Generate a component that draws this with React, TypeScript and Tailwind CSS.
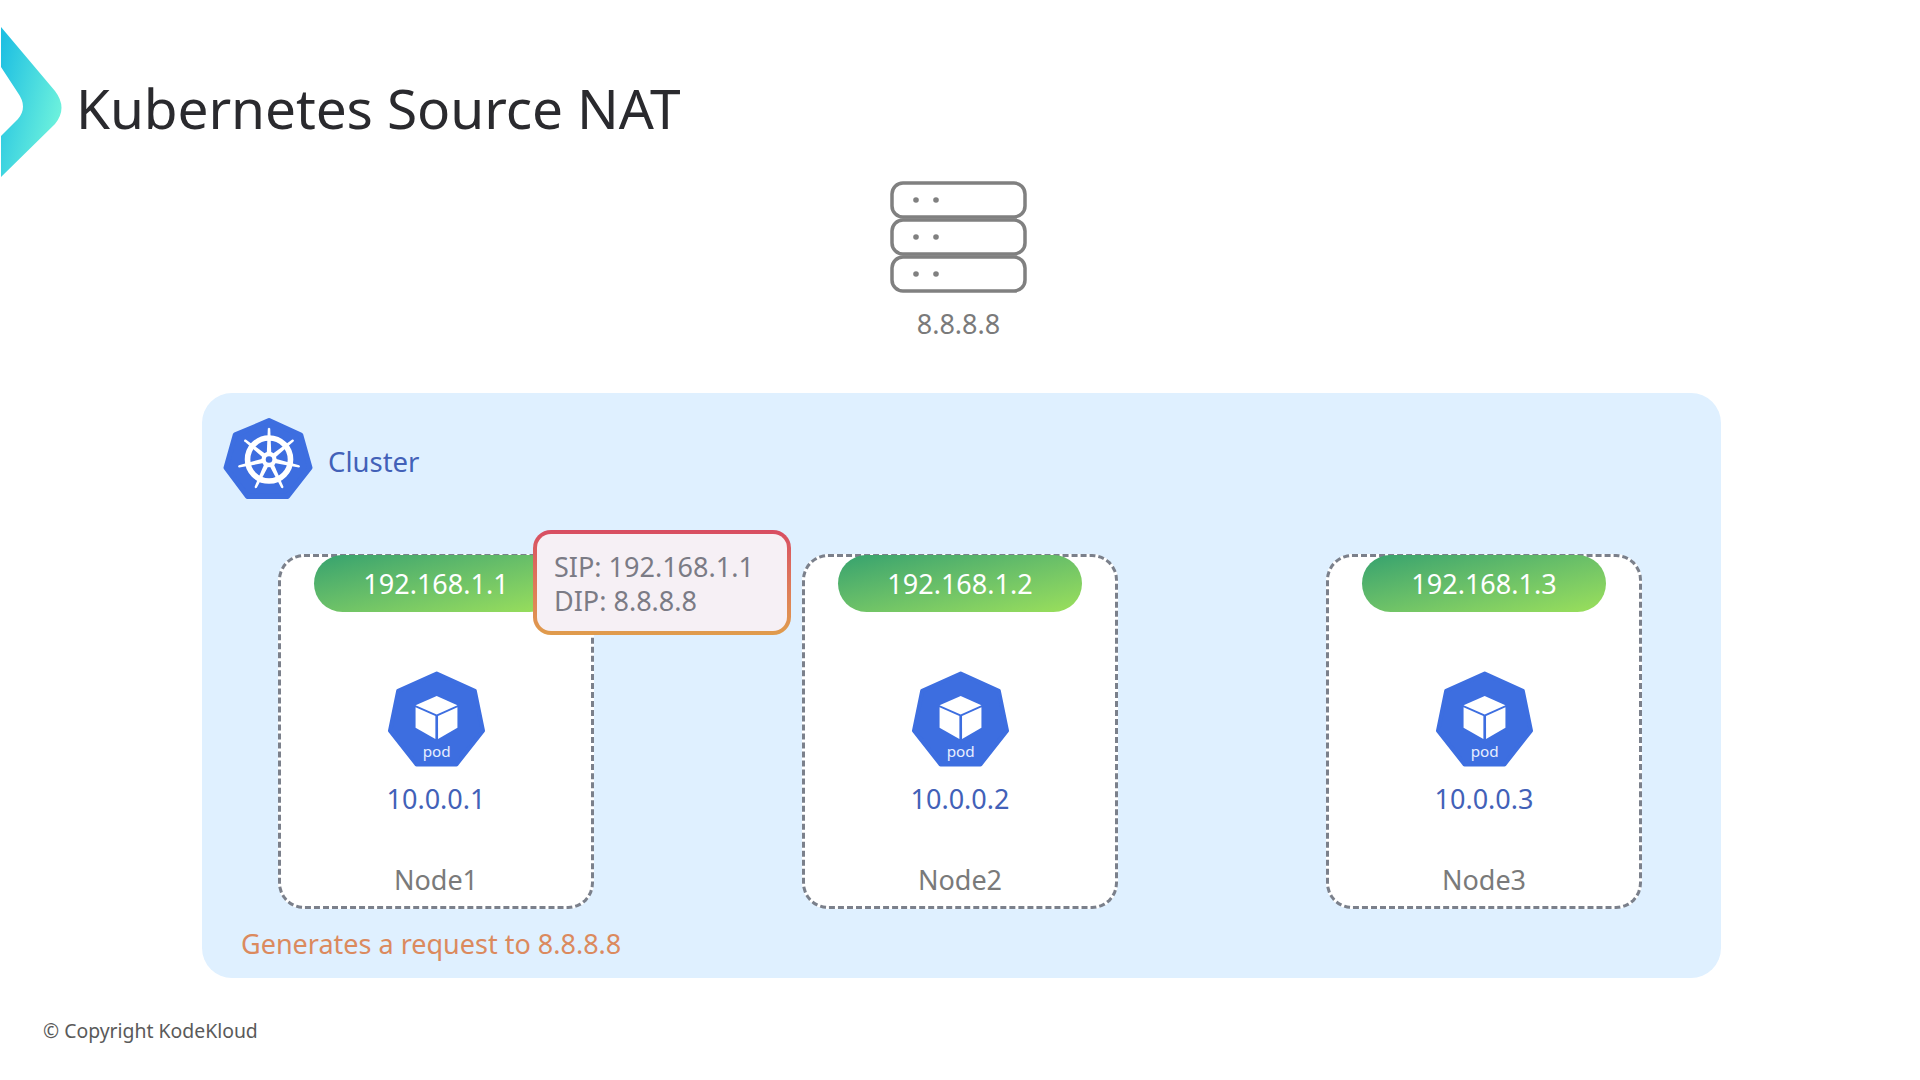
const font = { fontFamily: '"Noto Sans", sans-serif' };

const nodes = [
  { name: "Node1", publicIp: "192.168.1.1", podIp: "10.0.0.1" },
  { name: "Node2", publicIp: "192.168.1.2", podIp: "10.0.0.2" },
  { name: "Node3", publicIp: "192.168.1.3", podIp: "10.0.0.3" },
];

const Chevron = () => (
  <svg width="64" height="152" viewBox="0 0 64 150" className="shrink-0">
    <defs>
      <linearGradient id="chev" x1="0" y1="0.15" x2="1" y2="0.75">
        <stop offset="0" stopColor="#1fc0e2" />
        <stop offset="1" stopColor="#74f6dc" />
      </linearGradient>
    </defs>
    <path
      d="M1 0 L55 64 Q68 81 55 97 L1 150 V109 L18 92 Q28 80 18 66 L1 40 Z"
      fill="url(#chev)"
    />
  </svg>
);

const ServerIcon = () => (
  <svg width="137" height="112" viewBox="0 0 137 112">
    {[0, 37, 74].map((y) => (
      <g key={y}>
        <rect x="2" y={y + 2} width="133" height="34" rx="11" fill="#fff" stroke="#808080" strokeWidth="3.5" />
        <circle cx="26" cy={y + 19} r="2.8" fill="#808080" />
        <circle cx="46" cy={y + 19} r="2.8" fill="#808080" />
      </g>
    ))}
  </svg>
);

const WheelIcon = () => {
  const spokes = [0, 1, 2, 3, 4, 5, 6].map((i) => (i * 360) / 7);
  return (
    <svg width="90" height="83" viewBox="0 0 88 80" className="shrink-0">
      <polygon
        points="45,3 76,17 85,49 63,77 24,77 3,49 12,17"
        fill="#3d6ee0"
        stroke="#3d6ee0"
        strokeWidth="5"
        strokeLinejoin="round"
      />
      <circle cx="45" cy="41" r="21" fill="none" stroke="#fff" strokeWidth="5.5" />
      {spokes.map((a) => (
        <g key={a} transform={`rotate(${a} 45 41)`}>
          <path d="M42.8 35 L43.8 11 Q45 9 46.2 11 L47.2 35 Z" fill="#fff" />
        </g>
      ))}
      <circle cx="45" cy="41" r="7.5" fill="#fff" />
      <circle cx="45" cy="41" r="3.2" fill="#3d6ee0" />
    </svg>
  );
};

const PodIcon = () => (
  <svg width="97" height="96" viewBox="0 0 95 93">
    <polygon
      points="47.7,2 85,19 93,58 67,91 28,91 2,58 10,19"
      fill="#3d6ee0"
      stroke="#3d6ee0"
      strokeWidth="4"
      strokeLinejoin="round"
    />
    <polygon points="47.7,24 68,33 47.7,42 27,33" fill="#fff" />
    <polygon points="27,35 46.4,43.5 46.4,66 27,55" fill="#fff" />
    <polygon points="68,35 49,43.5 49,66 68,55" fill="#fff" />
    <text x="47.7" y="84" textAnchor="middle" fontSize="15" fill="#e8efff" style={font}>
      pod
    </text>
  </svg>
);

const NodeCard = ({ name, publicIp, podIp, children }: { name: string; publicIp: string; podIp: string; children?: React.ReactNode }) => (
  <div className="relative flex h-[355px] w-[316px] flex-col items-center rounded-[26px] border-[3px] border-dashed border-[#7b808b] bg-white">
    <div className="-mt-[2px] flex h-[57px] w-[244px] shrink-0 items-center justify-center rounded-full bg-gradient-to-br from-[#34a26e] to-[#9be05a] pt-[2px] text-[27px] text-white">
      {publicIp}
    </div>
    <div className="mt-[59px] flex h-[96px] items-center">
      <PodIcon />
    </div>
    <div className="mt-[14px] text-[27px] leading-[36px] text-[#4261b8]">{podIp}</div>
    <div className="mt-[45px] text-[27px] leading-[36px] text-[#7a7a7a]">{name}</div>
    {children}
  </div>
);

export default function App() {
  return (
    <div className="flex h-screen w-full flex-col overflow-hidden bg-white pt-[27px]" style={font}>
      <header className="flex h-[150px] items-center gap-[12px]">
        <Chevron />
        <h1 className="mt-[10px] text-[55px] leading-none tracking-[-0.1px] text-[#2a2a2e]">Kubernetes Source NAT</h1>
      </header>

      <section className="mt-[4px] flex w-[1917px] flex-col items-center">
        <ServerIcon />
        <div className="mt-[13px] text-[27px] leading-[36px] text-[#7a7a7a]">8.8.8.8</div>
      </section>

      <section className="ml-[202px] mt-[51px] h-[585px] w-[1519px] rounded-[30px] bg-[#dff0ff] px-[76px]">
        <div className="-ml-[55px] flex h-[107px] items-end gap-[15px]">
          <WheelIcon />
          <span className="pb-[20px] text-[27.5px] leading-[36px] text-[#4261b8]">Cluster</span>
        </div>
        <div className="mt-[54px] flex gap-[208px]">
          {nodes.map((n, i) => (
            <NodeCard key={n.name} {...n}>
              {i === 0 && (
                <div className="absolute left-[252px] top-[-27px] z-10 h-[105px] w-[258px] rounded-[18px] bg-gradient-to-b from-[#d84d62] to-[#e09c4c] p-[4px]">
                  <div className="flex h-full w-full flex-col justify-center rounded-[14px] bg-[#f6f0f5] pl-[17px] pt-[2px] text-[27px] leading-[34px] text-[#7b7b85]">
                    <div>SIP: 192.168.1.1</div>
                    <div>DIP: 8.8.8.8</div>
                  </div>
                </div>
              )}
            </NodeCard>
          ))}
        </div>
        <div className="-ml-[37px] mt-[17px] text-[27px] leading-[36px] text-[#db8a5e]">Generates a request to 8.8.8.8</div>
      </section>

      <footer className="ml-[43px] mt-[39px] text-[19.4px] leading-[28px] text-[#5a5a5a]">© Copyright KodeKloud</footer>
    </div>
  );
}
